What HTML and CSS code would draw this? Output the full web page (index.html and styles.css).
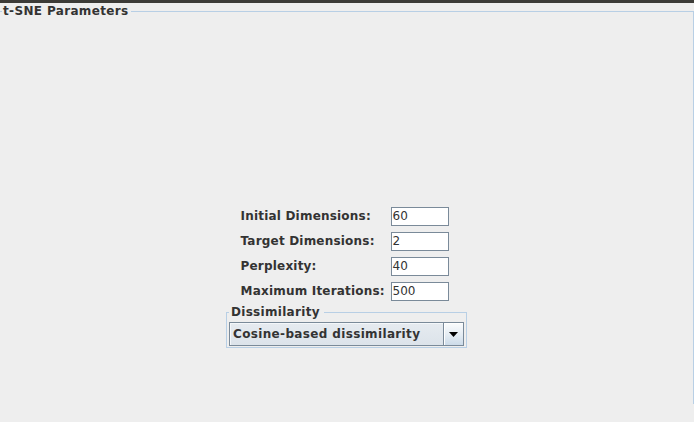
FILE: index.html
```html
<!DOCTYPE html>
<html>
<head>
<meta charset="utf-8">
<link rel="stylesheet" href="styles.css">
</head>
<body>
<div class="topbar"></div>
<fieldset class="panel">
  <legend class="panel-title">t-SNE Parameters</legend>
  <div class="form-wrap">
    <div class="params">
      <span class="lbl">Initial Dimensions:</span><span class="field">60</span>
      <span class="lbl">Target Dimensions:</span><span class="field">2</span>
      <span class="lbl">Perplexity:</span><span class="field">40</span>
      <span class="lbl">Maximum Iterations:</span><span class="field">500</span>
    </div>
    <fieldset class="group">
      <legend class="group-title">Dissimilarity</legend>
      <div class="combo">
        <span class="combo-text">Cosine-based dissimilarity</span>
        <span class="combo-btn"><svg width="9" height="5" viewBox="0 0 9 5"><path d="M0 0H9L4.5 5Z" fill="#000"/></svg></span>
      </div>
    </fieldset>
  </div>
</fieldset>
</body>
</html>
```
FILE: styles.css
```css
html, body {
  margin: 0;
  padding: 0;
  background: #eeeeee;
  font-family: "DejaVu Sans", sans-serif;
  font-size: 12px;
  color: #333333;
  height: 422px;
  overflow: hidden;
}
.topbar {
  height: 3px;
  background: #3c3b37;
}
.panel {
  margin: 0;
  padding: 0;
  min-width: 0;
  border: 1px solid #b8cfe5;
  border-left: none;
  border-bottom: none;
  height: 400px;
}
.panel-title {
  margin-left: 2px;
  padding: 0 2px 0 1px;
  font-weight: bold;
  line-height: 16px;
  letter-spacing: 0.35px;
  color: #333333;
}
.form-wrap {
  display: flex;
  flex-direction: column;
  align-items: center;
  padding-top: 188px;
}
.params {
  display: grid;
  grid-template-columns: 150px 58px;
  grid-auto-rows: 19px;
  row-gap: 6px;
  margin-right: 4px;
}
.lbl {
  font-weight: bold;
  line-height: 19px;
  letter-spacing: 0.2px;
  white-space: nowrap;
}
.field {
  box-sizing: border-box;
  height: 19px;
  border: 1px solid #7a8a99;
  background: #ffffff;
  padding-left: 1px;
  line-height: 17px;
  color: #333333;
}
.group {
  box-sizing: border-box;
  width: 241px;
  margin: 3px 0 0 0;
  padding: 1px 2px 1px 2px;
  min-width: 0;
  border: 1px solid #b8cfe5;
}
.group-title {
  padding: 0 4px 0 2px;
  margin-left: 0;
  font-weight: bold;
  line-height: 17px;
  letter-spacing: 0.3px;
  color: #333333;
}
.combo {
  box-sizing: border-box;
  height: 24px;
  border: 1px solid #7a8a99;
  display: flex;
  background: linear-gradient(#e6ebf0, #dce3ea);
}
.combo-text {
  flex: 1;
  font-weight: bold;
  line-height: 22px;
  padding-left: 3px;
  letter-spacing: 0.35px;
  white-space: nowrap;
  overflow: hidden;
  box-shadow: inset 1px 1px 0 #f4f7fa;
}
.combo-btn {
  width: 19px;
  border-left: 1px solid #7a8a99;
  display: flex;
  align-items: center;
  justify-content: center;
  background: linear-gradient(#fbfcfd, #e4ecf3 55%, #ccdbe9);
  box-shadow: inset 1px 1px 0 #ffffff;
}
```
